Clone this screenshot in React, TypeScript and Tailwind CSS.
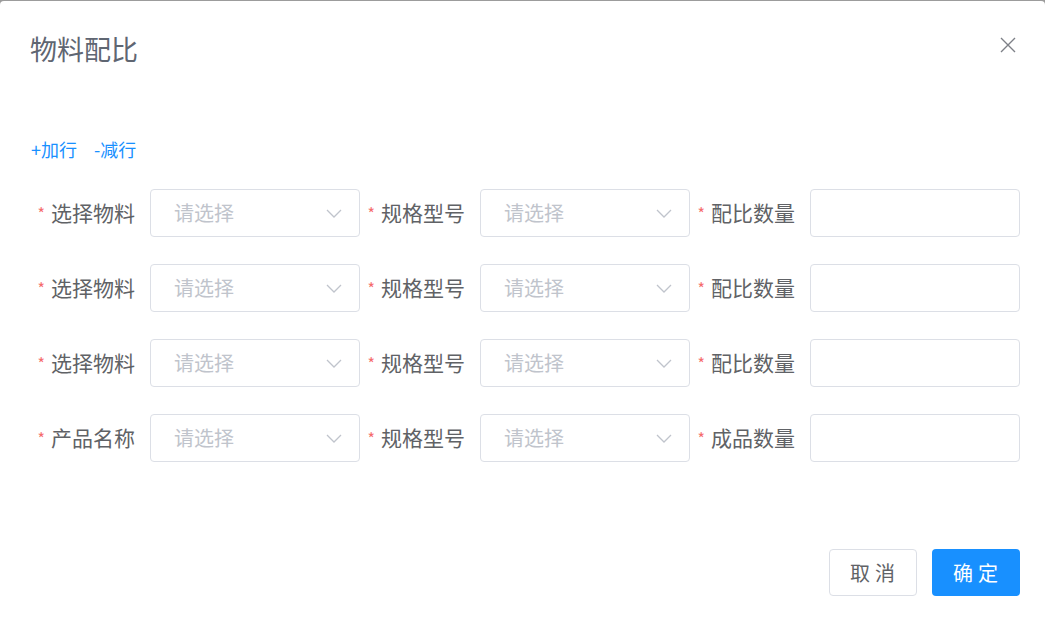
const font = { fontFamily: '"Noto Sans CJK SC", "Noto Sans", sans-serif' };

function Chevron() {
  return (
    <svg width="16" height="9" viewBox="0 0 16 9" fill="none">
      <polyline points="1,1 8,8 15,1" stroke="#c0c4cc" strokeWidth="1.3" />
    </svg>
  );
}

function Close() {
  return (
    <svg width="16" height="16" viewBox="0 0 16 16" fill="none" className="mb-[8px] mr-[4px]">
      <path d="M1 1L15 15M15 1L1 15" stroke="#7d8087" strokeWidth="1.4" />
    </svg>
  );
}

function Label({ text }: { text: string }) {
  return (
    <div className="flex w-[120px] shrink-0 items-center justify-end pr-[15px] text-[21px] text-[#606266]">
      <span className="mr-[6px] text-[16px] text-[#f56c6c]">*</span>
      {text}
    </div>
  );
}

function Select() {
  return (
    <div className="flex h-[48px] w-[210px] items-center justify-between rounded-[4px] border border-[#dcdfe6] pl-[23px] pr-[17px]">
      <span className="text-[20px] text-[#c0c4cc]">请选择</span>
      <Chevron />
    </div>
  );
}

function Input() {
  return <div className="h-[48px] w-[210px] rounded-[4px] border border-[#dcdfe6]" />;
}

const rows = [
  ["选择物料", "规格型号", "配比数量"],
  ["选择物料", "规格型号", "配比数量"],
  ["选择物料", "规格型号", "配比数量"],
  ["产品名称", "规格型号", "成品数量"],
];

export default function App() {
  return (
    <div className="h-[624px] w-[1045px] overflow-hidden bg-[#9c9c9c] pt-px" style={font}>
      <div className="flex h-full flex-col rounded-t-[4px] bg-white pl-[30px] pr-[25px]">
        <div className="flex items-center justify-between pt-[28px]">
          <h1 className="text-[27px] leading-[40px] text-[#5f6672]">物料配比</h1>
          <Close />
        </div>

        <div className="mt-[68px] flex gap-[17px] pl-px text-[18px] leading-[24px] text-[#1890ff]">
          <span>+加行</span>
          <span>-减行</span>
        </div>

        <div className="mt-[28px] flex flex-col gap-[27px]">
          {rows.map((r, i) => (
            <div key={i} className="flex">
              <Label text={r[0]} />
              <Select />
              <Label text={r[1]} />
              <Select />
              <Label text={r[2]} />
              <Input />
            </div>
          ))}
        </div>

        <div className="mt-[87px] flex justify-end gap-[15px]">
          <button className="h-[47px] w-[88px] rounded-[4px] border border-[#dcdfe6] bg-white pl-[4px] text-[20px] tracking-[5px] text-[#606266]">
            取消
          </button>
          <button className="h-[47px] w-[88px] rounded-[4px] bg-[#1890ff] pl-[4px] text-[20px] tracking-[5px] text-white">
            确定
          </button>
        </div>
      </div>
    </div>
  );
}
